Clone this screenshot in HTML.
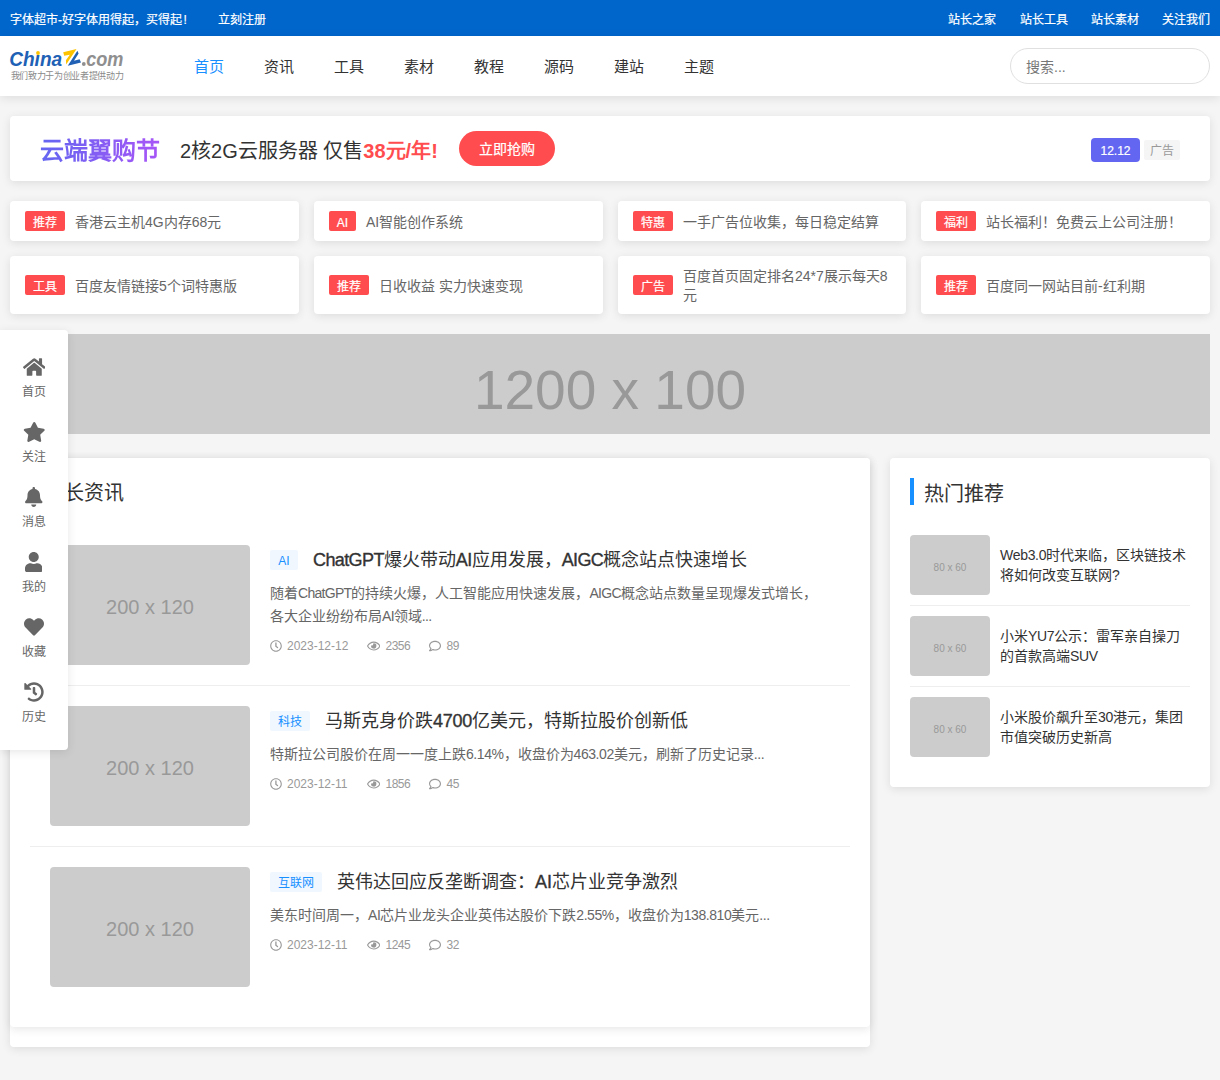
<!DOCTYPE html>
<html lang="zh-CN">
<head>
<meta charset="utf-8">
<title>站长之家</title>
<style>
*{margin:0;padding:0;box-sizing:border-box;}
html,body{width:1220px;height:1080px;overflow:hidden;}
body{background:#f5f5f5;font-family:"Liberation Sans",sans-serif;color:#333;position:relative;}
i{font-style:normal;}
.a{position:absolute;white-space:nowrap;}
.ic{position:absolute;display:block;}
.topbar{position:absolute;left:0;top:0;width:1220px;height:36px;background:#0066cc;color:#fff;font-size:12px;line-height:36px;}
.topbar .a{top:2px;-webkit-text-stroke:0.2px #fff;}
.header{position:absolute;left:0;top:36px;width:1220px;height:60px;background:#fff;box-shadow:0 2px 10px rgba(0,0,0,0.1);}
.nav{position:absolute;top:1px;line-height:60px;font-size:15px;color:#333;}
.nav.on{color:#1890ff;}
.search{position:absolute;left:1010px;top:12px;width:200px;height:36px;border:1px solid #e0e0e0;border-radius:18px;}
.search .a{left:15px;top:1px;font-size:14px;line-height:34px;color:#777;}
.card{position:absolute;background:#fff;border-radius:4px;box-shadow:0 2px 10px rgba(0,0,0,0.1);}
.bn-title{left:30px;top:2px;line-height:65px;font-size:24px;font-weight:bold;background:linear-gradient(90deg,#6366f1,#a855f7);-webkit-background-clip:text;background-clip:text;color:transparent;}
.bn-text{left:170px;top:3px;line-height:65px;font-size:20px;color:#333;}
.bn-text b{color:#ff4d4f;}
.bn-btn{position:absolute;left:449px;top:15px;width:96px;height:35px;border-radius:17.5px;background:#ff4d4f;}
.bn-btn .a{left:0;width:96px;text-align:center;top:0.5px;color:#fff;font-size:14px;line-height:35px;-webkit-text-stroke:0.2px #fff;}
.bn-1212{position:absolute;left:1081px;top:22px;width:49px;height:24px;border-radius:4px;background:#6366f1;}
.bn-1212 .a{left:0;width:49px;text-align:center;top:1px;color:#fff;font-size:12px;line-height:24px;-webkit-text-stroke:0.2px #fff;}
.bn-ad{position:absolute;left:1134px;top:24px;width:36px;height:20px;border-radius:2px;background:#f5f5f5;}
.bn-ad .a{left:0;width:36px;text-align:center;top:1px;color:#999;font-size:12px;line-height:20px;}
.tg{position:absolute;left:15px;height:20px;border-radius:2px;background:#ff4d4f;}
.tg .a{left:0;right:0;text-align:center;top:1.5px;color:#fff;font-size:12px;line-height:20px;-webkit-text-stroke:0.2px #fff;}
.adt{position:absolute;left:65px;font-size:14px;color:#666;white-space:nowrap;}
.ph{position:absolute;background:#ccc;color:#999;text-align:center;font-family:"Liberation Sans",sans-serif;overflow:hidden;}
.side{position:absolute;left:0;top:330px;width:68px;height:420px;background:#fff;border-radius:0 4px 4px 0;box-shadow:0 2px 10px rgba(0,0,0,0.1);z-index:10;}
.side .lb{left:0;width:68px;text-align:center;font-size:12px;line-height:17px;color:#666;}
.sec-t{position:absolute;left:20px;top:20px;width:4px;height:27px;background:#1890ff;}
.sec-tx{font-size:20px;line-height:27px;color:#333;}
.img{position:absolute;border-radius:4px;background:#ccc;color:#999;text-align:center;font-family:"Liberation Sans",sans-serif;}
.tag{position:absolute;height:20px;background:#f0f7ff;border-radius:2px;}
.tag .a{left:0;right:0;text-align:center;top:1px;color:#1890ff;font-size:12px;line-height:20px;}
.tit{font-size:18px;line-height:30px;color:#333;}
.desc{position:absolute;left:260px;width:548px;font-size:14px;line-height:23px;color:#666;}
.meta{font-size:12px;line-height:20px;color:#999;}
.sep{position:absolute;left:20px;width:820px;height:1px;background:#eee;}
.htx{position:absolute;left:110px;width:190px;font-size:14px;line-height:19.6px;color:#333;}
.hsep{position:absolute;left:20px;width:280px;height:1px;background:#eee;}
</style>
</head>
<body>
<div class="topbar">
<span class="a" style="left:10px">字体超市-好字体用得起，买得起<i style="margin-left:1.5px">!</i></span>
<span class="a" style="left:218px">立刻注册</span>
<span class="a" style="left:948px">站长之家</span>
<span class="a" style="left:1019.5px">站长工具</span>
<span class="a" style="left:1091px">站长素材</span>
<span class="a" style="left:1162px">关注我们</span>
</div>
<div class="header">
<span class="a nav on" style="left:193.8px">首页</span>
<span class="a nav" style="left:263.8px">资讯</span>
<span class="a nav" style="left:333.8px">工具</span>
<span class="a nav" style="left:403.8px">素材</span>
<span class="a nav" style="left:473.8px">教程</span>
<span class="a nav" style="left:543.8px">源码</span>
<span class="a nav" style="left:613.8px">建站</span>
<span class="a nav" style="left:683.8px">主题</span>
<div class="search"><span class="a">搜索...</span></div>
</div>
<svg class="ic" style="left:0;top:0" width="140" height="96" viewBox="0 0 140 96">
  <text x="9.2" y="66" font-family="Liberation Sans" font-weight="bold" font-style="italic" font-size="19.5" fill="#2061b5" textLength="53" lengthAdjust="spacingAndGlyphs">Ch&#305;na</text>
  <circle cx="38" cy="53" r="1.9" fill="#fdc300"/>
  <path d="M63.2 52.2 L76.5 49.0 L66.2 64.5 L65.9 60.2 L69.8 54.8 L64.2 55.8 Z" fill="#fdc300"/>
  <path d="M77.4 50.8 L78.6 53.5 L74.0 60.7 L79.6 59.3 L81.0 62.5 L67.8 65.7 Z" fill="#2061b5"/>
  <circle cx="83.8" cy="64" r="1.9" fill="#8f8f8f"/>
  <text x="86.2" y="66" font-family="Liberation Sans" font-weight="bold" font-style="italic" font-size="19.5" fill="#8f8f8f" textLength="37.3" lengthAdjust="spacingAndGlyphs">com</text>
  <text x="10.8" y="78.8" font-family="Liberation Sans" font-size="9.4" fill="#8a8a8a" textLength="112.6" lengthAdjust="spacingAndGlyphs">我们致力于为创业者提供动力</text>
</svg>
<div class="card" style="left:10px;top:116px;width:1200px;height:65px;">
<span class="a bn-title">云端翼购节</span>
<span class="a bn-text">2核2G云服务器 仅售<b>38元/年!</b></span>
<div class="bn-btn"><span class="a">立即抢购</span></div>
<div class="bn-1212"><span class="a">12.12</span></div>
<div class="bn-ad"><span class="a">广告</span></div>
</div>
<div class="card" style="left:10px;top:201px;width:289px;height:40px;"><div class="tg" style="top:10px;width:40px"><span class="a">推荐</span></div><span class="adt" style="left:65px;top:1px;line-height:40px">香港云主机4G内存68元</span></div>
<div class="card" style="left:314px;top:201px;width:289px;height:40px;"><div class="tg" style="top:10px;width:27px"><span class="a">AI</span></div><span class="adt" style="left:52px;top:1px;line-height:40px">AI智能创作系统</span></div>
<div class="card" style="left:618px;top:201px;width:288px;height:40px;"><div class="tg" style="top:10px;width:40px"><span class="a">特惠</span></div><span class="adt" style="left:65px;top:1px;line-height:40px">一手广告位收集，每日稳定结算</span></div>
<div class="card" style="left:921px;top:201px;width:289px;height:40px;"><div class="tg" style="top:10px;width:40px"><span class="a">福利</span></div><span class="adt" style="left:65px;top:1px;line-height:40px">站长福利！免费云上公司注册！</span></div>
<div class="card" style="left:10px;top:256px;width:289px;height:58px;"><div class="tg" style="top:19px;width:40px"><span class="a">工具</span></div><span class="adt" style="left:65px;top:1px;line-height:58px">百度友情链接5个词特惠版</span></div>
<div class="card" style="left:314px;top:256px;width:289px;height:58px;"><div class="tg" style="top:19px;width:40px"><span class="a">推荐</span></div><span class="adt" style="left:65px;top:1px;line-height:58px">日收收益 实力快速变现</span></div>
<div class="card" style="left:618px;top:256px;width:288px;height:58px;"><div class="tg" style="top:19px;width:40px"><span class="a">广告</span></div><div class="adt" style="left:65px;top:11px;width:210px;line-height:19px;white-space:normal">百度首页固定排名24*7展示每天8元</div></div>
<div class="card" style="left:921px;top:256px;width:289px;height:58px;"><div class="tg" style="top:19px;width:40px"><span class="a">推荐</span></div><span class="adt" style="left:65px;top:1px;line-height:58px">百度同一网站目前-红利期</span></div>
<div class="ph" style="left:10px;top:334px;width:1200px;height:100px;"><span class="a" style="left:0;width:1200px;top:6px;font-size:55px;line-height:100px;">1200 x 100</span></div>
<div class="card" style="left:10px;top:458px;width:860px;height:589px;"></div>
<div class="card" style="left:10px;top:458px;width:860px;height:569px;">
<div class="sec-t"></div><span class="a sec-tx" style="left:34px;top:21.5px;padding-left:0">站长资讯</span>
<div class="img" style="left:40px;top:87px;width:200px;height:120px;"><span class="a" style="left:0;width:200px;top:2px;font-size:20px;line-height:120px">200 x 120</span></div>
<div class="tag" style="left:260px;top:92px;width:28px"><span class="a">AI</span></div>
<span class="a tit" style="left:303px;top:86.5px"><i style="letter-spacing:-0.6px;-webkit-text-stroke:0.35px #333">ChatGPT</i>爆火带动<i style="letter-spacing:-0.6px;-webkit-text-stroke:0.35px #333">AI</i>应用发展，<i style="letter-spacing:-0.6px;-webkit-text-stroke:0.35px #333">AIGC</i>概念站点快速增长</span>
<div class="desc" style="top:124px">随着<i style="letter-spacing:-0.7px;">ChatGPT</i>的持续火爆，人工智能应用快速发展，<i style="letter-spacing:-0.7px;">AIGC</i>概念站点数量呈现爆发式增长，各大企业纷纷布局<i style="letter-spacing:-0.7px;">AI</i>领域<i style="letter-spacing:-0.7px;">...</i></div>
<svg class="ic" style="left:260px;top:181.5px" width="12" height="12" viewBox="0 0 512 512"><path fill="#999" d="M256 8C119 8 8 119 8 256s111 248 248 248 248-111 248-248S393 8 256 8zm0 448c-110.5 0-200-89.5-200-200S145.5 56 256 56s200 89.5 200 200-89.5 200-200 200zm61.8-104.4l-84.9-61.7c-5.2-3.8-8.3-9.8-8.3-16.2V118c0-6.6 5.4-12 12-12h32c6.6 0 12 5.4 12 12v141.7l66.8 48.6c5.4 3.9 6.5 11.4 2.6 16.8L334.6 349c-3.9 5.3-11.4 6.5-16.8 2.6z"/></svg>
<span class="a meta" style="left:277px;top:178px">2023-12-12</span>
<svg class="ic" style="left:356.8px;top:181.5px" width="13.5" height="12" viewBox="0 0 576 512"><path fill="#999" d="M288 144a110.94 110.94 0 0 0-31.24 5 55.4 55.4 0 0 1 7.24 27 56 56 0 0 1-56 56 55.4 55.4 0 0 1-27-7.24A111.71 111.71 0 1 0 288 144zm284.52 97.4C518.29 135.59 410.93 64 288 64S57.68 135.64 3.48 241.41a32.35 32.35 0 0 0 0 29.19C57.71 376.41 165.07 448 288 448s230.32-71.64 284.52-177.41a32.35 32.35 0 0 0 0-29.19zM288 400c-98.65 0-189.09-55-237.93-144C98.91 167 189.34 112 288 112s189.09 55 237.93 144C477.1 345 386.66 400 288 400z"/></svg>
<span class="a meta" style="left:375.5px;top:178px"><i style="letter-spacing:-0.5px;">2356</i></span>
<svg class="ic" style="left:419px;top:181.5px" width="12" height="12" viewBox="0 0 512 512"><path fill="#999" d="M256 32C114.6 32 0 125.1 0 240c0 47.6 19.9 91.2 52.9 126.3C38 405.7 7 439.1 6.5 439.5c-6.6 7-8.4 17.2-4.6 26S14.4 480 24 480c61.5 0 110-25.7 139.1-46.3C192 442.8 223.2 448 256 448c141.4 0 256-93.1 256-208S397.4 32 256 32zm0 368c-26.7 0-53.1-4.1-78.4-12.1l-22.7-7.2-19.5 13.8c-14.3 10.1-33.9 21.4-57.5 29 7.3-12.1 14.4-25.7 19.9-40.2l10.6-28.1-20.6-21.8C69.7 314.1 48 282.2 48 240c0-88.2 93.3-160 208-160s208 71.8 208 160-93.3 160-208 160z"/></svg>
<span class="a meta" style="left:436.5px;top:178px"><i style="letter-spacing:-0.5px;">89</i></span>
<div class="sep" style="top:227px"></div>
<div class="img" style="left:40px;top:248px;width:200px;height:120px;"><span class="a" style="left:0;width:200px;top:2px;font-size:20px;line-height:120px">200 x 120</span></div>
<div class="tag" style="left:260px;top:253px;width:40px"><span class="a">科技</span></div>
<span class="a tit" style="left:315px;top:247.5px">马斯克身价跌<i style="letter-spacing:-0.3px;-webkit-text-stroke:0.35px #333">4700</i>亿美元，特斯拉股价创新低</span>
<div class="desc" style="top:285px">特斯拉公司股价在周一一度上跌<i style="letter-spacing:-0.43px;">6.14%</i>，收盘价为<i style="letter-spacing:-0.43px;">463.02</i>美元，刷新了历史记录<i style="letter-spacing:-0.43px;">...</i></div>
<svg class="ic" style="left:260px;top:319.5px" width="12" height="12" viewBox="0 0 512 512"><path fill="#999" d="M256 8C119 8 8 119 8 256s111 248 248 248 248-111 248-248S393 8 256 8zm0 448c-110.5 0-200-89.5-200-200S145.5 56 256 56s200 89.5 200 200-89.5 200-200 200zm61.8-104.4l-84.9-61.7c-5.2-3.8-8.3-9.8-8.3-16.2V118c0-6.6 5.4-12 12-12h32c6.6 0 12 5.4 12 12v141.7l66.8 48.6c5.4 3.9 6.5 11.4 2.6 16.8L334.6 349c-3.9 5.3-11.4 6.5-16.8 2.6z"/></svg>
<span class="a meta" style="left:277px;top:316px">2023-12-11</span>
<svg class="ic" style="left:356.8px;top:319.5px" width="13.5" height="12" viewBox="0 0 576 512"><path fill="#999" d="M288 144a110.94 110.94 0 0 0-31.24 5 55.4 55.4 0 0 1 7.24 27 56 56 0 0 1-56 56 55.4 55.4 0 0 1-27-7.24A111.71 111.71 0 1 0 288 144zm284.52 97.4C518.29 135.59 410.93 64 288 64S57.68 135.64 3.48 241.41a32.35 32.35 0 0 0 0 29.19C57.71 376.41 165.07 448 288 448s230.32-71.64 284.52-177.41a32.35 32.35 0 0 0 0-29.19zM288 400c-98.65 0-189.09-55-237.93-144C98.91 167 189.34 112 288 112s189.09 55 237.93 144C477.1 345 386.66 400 288 400z"/></svg>
<span class="a meta" style="left:375.5px;top:316px"><i style="letter-spacing:-0.5px;">1856</i></span>
<svg class="ic" style="left:419px;top:319.5px" width="12" height="12" viewBox="0 0 512 512"><path fill="#999" d="M256 32C114.6 32 0 125.1 0 240c0 47.6 19.9 91.2 52.9 126.3C38 405.7 7 439.1 6.5 439.5c-6.6 7-8.4 17.2-4.6 26S14.4 480 24 480c61.5 0 110-25.7 139.1-46.3C192 442.8 223.2 448 256 448c141.4 0 256-93.1 256-208S397.4 32 256 32zm0 368c-26.7 0-53.1-4.1-78.4-12.1l-22.7-7.2-19.5 13.8c-14.3 10.1-33.9 21.4-57.5 29 7.3-12.1 14.4-25.7 19.9-40.2l10.6-28.1-20.6-21.8C69.7 314.1 48 282.2 48 240c0-88.2 93.3-160 208-160s208 71.8 208 160-93.3 160-208 160z"/></svg>
<span class="a meta" style="left:436.5px;top:316px"><i style="letter-spacing:-0.5px;">45</i></span>
<div class="sep" style="top:388px"></div>
<div class="img" style="left:40px;top:409px;width:200px;height:120px;"><span class="a" style="left:0;width:200px;top:2px;font-size:20px;line-height:120px">200 x 120</span></div>
<div class="tag" style="left:260px;top:414px;width:52px"><span class="a">互联网</span></div>
<span class="a tit" style="left:327px;top:408.5px">英伟达回应反垄断调查：<i style="letter-spacing:0px;-webkit-text-stroke:0.35px #333">AI</i>芯片业竞争激烈</span>
<div class="desc" style="top:446px">美东时间周一，<i style="letter-spacing:-0.45px;">AI</i>芯片业龙头企业英伟达股价下跌<i style="letter-spacing:-0.45px;">2.55%</i>，收盘价为<i style="letter-spacing:-0.45px;">138.810</i>美元<i style="letter-spacing:-0.45px;">...</i></div>
<svg class="ic" style="left:260px;top:480.5px" width="12" height="12" viewBox="0 0 512 512"><path fill="#999" d="M256 8C119 8 8 119 8 256s111 248 248 248 248-111 248-248S393 8 256 8zm0 448c-110.5 0-200-89.5-200-200S145.5 56 256 56s200 89.5 200 200-89.5 200-200 200zm61.8-104.4l-84.9-61.7c-5.2-3.8-8.3-9.8-8.3-16.2V118c0-6.6 5.4-12 12-12h32c6.6 0 12 5.4 12 12v141.7l66.8 48.6c5.4 3.9 6.5 11.4 2.6 16.8L334.6 349c-3.9 5.3-11.4 6.5-16.8 2.6z"/></svg>
<span class="a meta" style="left:277px;top:477px">2023-12-11</span>
<svg class="ic" style="left:356.8px;top:480.5px" width="13.5" height="12" viewBox="0 0 576 512"><path fill="#999" d="M288 144a110.94 110.94 0 0 0-31.24 5 55.4 55.4 0 0 1 7.24 27 56 56 0 0 1-56 56 55.4 55.4 0 0 1-27-7.24A111.71 111.71 0 1 0 288 144zm284.52 97.4C518.29 135.59 410.93 64 288 64S57.68 135.64 3.48 241.41a32.35 32.35 0 0 0 0 29.19C57.71 376.41 165.07 448 288 448s230.32-71.64 284.52-177.41a32.35 32.35 0 0 0 0-29.19zM288 400c-98.65 0-189.09-55-237.93-144C98.91 167 189.34 112 288 112s189.09 55 237.93 144C477.1 345 386.66 400 288 400z"/></svg>
<span class="a meta" style="left:375.5px;top:477px"><i style="letter-spacing:-0.5px;">1245</i></span>
<svg class="ic" style="left:419px;top:480.5px" width="12" height="12" viewBox="0 0 512 512"><path fill="#999" d="M256 32C114.6 32 0 125.1 0 240c0 47.6 19.9 91.2 52.9 126.3C38 405.7 7 439.1 6.5 439.5c-6.6 7-8.4 17.2-4.6 26S14.4 480 24 480c61.5 0 110-25.7 139.1-46.3C192 442.8 223.2 448 256 448c141.4 0 256-93.1 256-208S397.4 32 256 32zm0 368c-26.7 0-53.1-4.1-78.4-12.1l-22.7-7.2-19.5 13.8c-14.3 10.1-33.9 21.4-57.5 29 7.3-12.1 14.4-25.7 19.9-40.2l10.6-28.1-20.6-21.8C69.7 314.1 48 282.2 48 240c0-88.2 93.3-160 208-160s208 71.8 208 160-93.3 160-208 160z"/></svg>
<span class="a meta" style="left:436.5px;top:477px"><i style="letter-spacing:-0.5px;">32</i></span>
</div>
<div class="card" style="left:890px;top:458px;width:320px;height:329px;">
<div class="sec-t"></div><span class="a sec-tx" style="left:34px;top:22.5px">热门推荐</span>
<div class="img" style="left:20px;top:77px;width:80px;height:60px;"><span class="a" style="left:0;width:80px;top:2.5px;font-size:10px;line-height:60px">80 x 60</span></div>
<div class="htx" style="top:88px"><i style="letter-spacing:-0.3px;">Web3.0</i>时代来临，区块链技术将如何改变互联网<i style="letter-spacing:-0.3px;">?</i></div>
<div class="hsep" style="top:147px"></div>
<div class="img" style="left:20px;top:158px;width:80px;height:60px;"><span class="a" style="left:0;width:80px;top:2.5px;font-size:10px;line-height:60px">80 x 60</span></div>
<div class="htx" style="top:169px">小米<i style="letter-spacing:-0.3px;">YU7</i>公示：雷军亲自操刀的首款高端<i style="letter-spacing:-0.3px;">SUV</i></div>
<div class="hsep" style="top:228px"></div>
<div class="img" style="left:20px;top:239px;width:80px;height:60px;"><span class="a" style="left:0;width:80px;top:2.5px;font-size:10px;line-height:60px">80 x 60</span></div>
<div class="htx" style="top:250px">小米股价飙升至<i style="letter-spacing:-0.3px;">30</i>港元，集团市值突破历史新高</div>
</div>
<div class="side">
<svg class="ic" style="left:22.9px;top:26.5px" width="22.5" height="20" viewBox="0 0 576 512"><path fill="#666" d="M280.37 148.26L96 300.11V464a16 16 0 0 0 16 16l112.06-.29a16 16 0 0 0 15.92-16V368a16 16 0 0 1 16-16h64a16 16 0 0 1 16 16v95.64a16 16 0 0 0 16 16.05L464 480a16 16 0 0 0 16-16V300L295.67 148.26a12.19 12.19 0 0 0-15.3 0zM571.6 251.47L488 182.56V44.05a12 12 0 0 0-12-12h-56a12 12 0 0 0-12 12v72.61L318.47 43a48 48 0 0 0-61 0L4.34 251.47a12 12 0 0 0-1.6 16.9l25.5 31A12 12 0 0 0 45.15 301l235.22-193.74a12.19 12.19 0 0 1 15.3 0L530.9 301a12 12 0 0 0 16.9-1.6l25.5-31a12 12 0 0 0-1.7-16.93z"/></svg>
<span class="a lb" style="top:54.0px">首页</span>
<svg class="ic" style="left:22.8px;top:91.5px" width="22.5" height="20" viewBox="0 0 576 512"><path fill="#666" d="M259.3 17.8L194 150.2 47.9 171.5c-26.2 3.8-36.7 36.1-17.7 54.6l105.7 103-25 145.5c-4.5 26.3 23.2 46 46.4 33.7L288 439.6l130.7 68.7c23.2 12.2 50.9-7.4 46.4-33.7l-25-145.5 105.7-103c19-18.5 8.5-50.8-17.7-54.6L382 150.2 316.7 17.8c-11.7-23.6-45.6-23.9-57.4 0z"/></svg>
<span class="a lb" style="top:119.0px">关注</span>
<svg class="ic" style="left:25.2px;top:156.5px" width="17.5" height="20" viewBox="0 0 448 512"><path fill="#666" d="M224 512c35.32 0 63.97-28.65 63.97-64H160.03c0 35.35 28.65 64 63.97 64zm215.39-149.71c-19.32-20.76-55.47-51.99-55.47-154.29 0-77.7-54.48-139.9-127.94-155.16V32c0-17.67-14.32-32-31.98-32s-31.98 14.33-31.98 32v20.84C118.56 68.1 64.08 130.3 64.08 208c0 102.3-36.15 133.53-55.47 154.29-6 6.45-8.66 14.16-8.61 21.71.11 16.4 12.98 32 32.1 32h383.8c19.12 0 32-15.6 32.1-32 .05-7.55-2.61-15.27-8.61-21.71z"/></svg>
<span class="a lb" style="top:184.0px">消息</span>
<svg class="ic" style="left:24.6px;top:221.5px" width="17.5" height="20" viewBox="0 0 448 512"><path fill="#666" d="M224 256c70.7 0 128-57.3 128-128S294.7 0 224 0 96 57.3 96 128s57.3 128 128 128zm89.6 32h-16.7c-22.2 10.2-46.9 16-72.9 16s-50.6-5.8-72.9-16h-16.7C60.2 288 0 348.2 0 422.4V464c0 26.5 21.5 48 48 48h352c26.5 0 48-21.5 48-48v-41.6c0-74.2-60.2-134.4-134.4-134.4z"/></svg>
<span class="a lb" style="top:249.0px">我的</span>
<svg class="ic" style="left:23.8px;top:286.5px" width="20" height="20" viewBox="0 0 512 512"><path fill="#666" d="M462.3 62.6C407.5 15.9 326 24.3 275.7 76.2L256 96.5l-19.7-20.3C186.1 24.3 104.5 15.9 49.7 62.6c-62.8 53.6-66.1 149.8-9.9 207.9l193.5 199.8c12.5 12.9 32.8 12.9 45.3 0l193.5-199.8c56.3-58.1 53-154.3-9.8-207.9z"/></svg>
<span class="a lb" style="top:314.0px">收藏</span>
<svg class="ic" style="left:23.6px;top:351.5px" width="20" height="20" viewBox="0 0 512 512"><path fill="#666" d="M504 255.531c.253 136.64-111.18 248.372-247.82 248.468-59.015.042-113.223-20.53-155.822-54.911-11.077-8.94-11.905-25.541-1.839-35.607l11.267-11.267c8.609-8.609 22.353-9.551 31.891-1.984C173.062 425.135 212.781 440 256 440c101.705 0 184-82.311 184-184 0-101.705-82.311-184-184-184-48.814 0-93.149 18.969-126.068 49.932l50.754 50.754c10.08 10.08 2.941 27.314-11.313 27.314H24c-8.837 0-16-7.163-16-16V38.627c0-14.254 17.234-21.393 27.314-11.314l49.372 49.372C129.209 34.136 189.552 8 256 8c136.81 0 247.747 110.78 248 247.531zm-180.912 78.784l9.823-12.63c8.138-10.463 6.253-25.542-4.21-33.679L288 256.349V152c0-13.255-10.745-24-24-24h-16c-13.255 0-24 10.745-24 24v135.651l65.409 50.874c10.463 8.137 25.541 6.253 33.679-4.21z"/></svg>
<span class="a lb" style="top:379.0px">历史</span>
</div>
</body>
</html>
